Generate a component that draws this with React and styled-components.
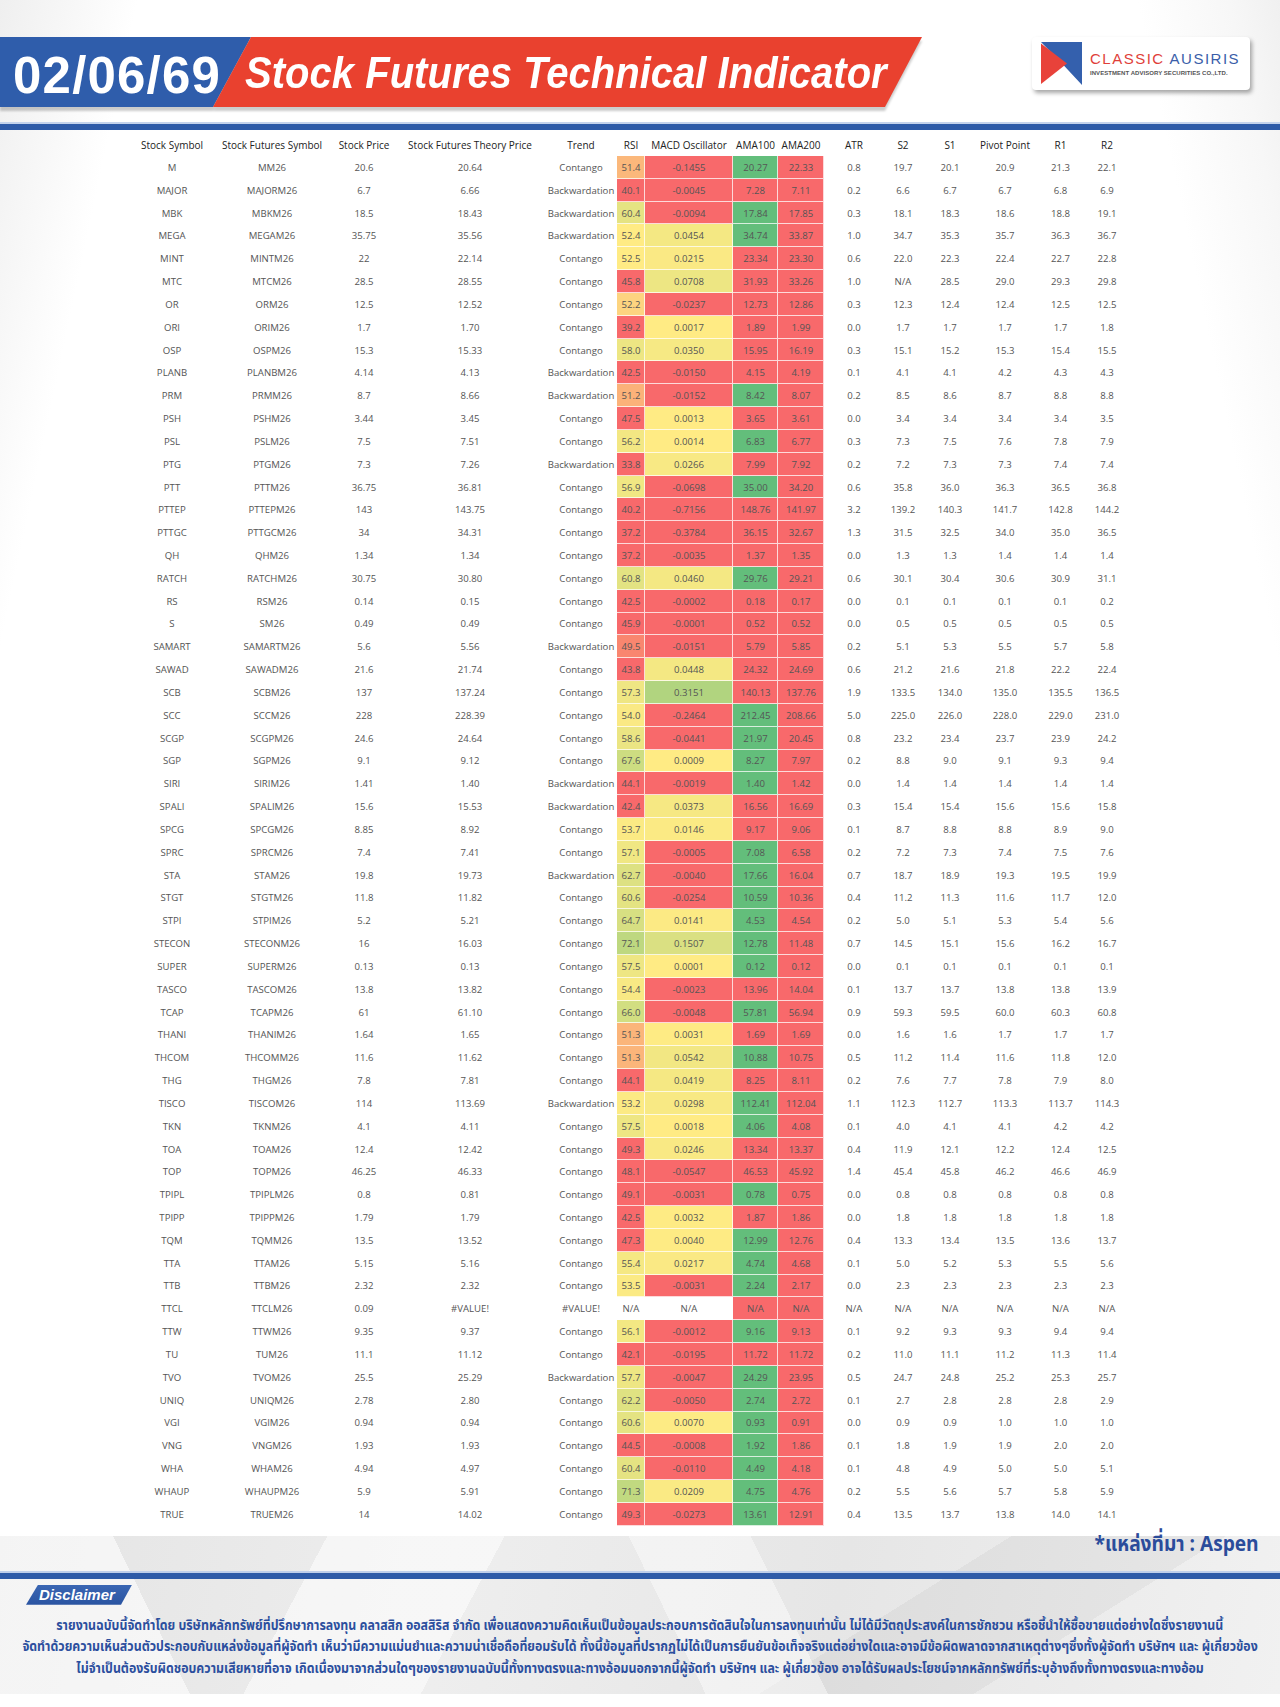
import React from "react";
import styled, { createGlobalStyle } from "styled-components";

const GlobalStyle = createGlobalStyle`
  html, body {
    margin: 0;
    padding: 0;
    background: #fff;
  }
  body {
    font-family: "Open Sans", "Liberation Sans", sans-serif;
  }
`;

// symbol, futures, price, theory, trend, rsi, macd, ama100, ama200, atr, s2, s1, pivot, r1, r2
const RAW = `
M MM26 20.6 20.64 C 51.4 -0.1455 20.27 22.33 0.8 19.7 20.1 20.9 21.3 22.1
MAJOR MAJORM26 6.7 6.66 B 40.1 -0.0045 7.28 7.11 0.2 6.6 6.7 6.7 6.8 6.9
MBK MBKM26 18.5 18.43 B 60.4 -0.0094 17.84 17.85 0.3 18.1 18.3 18.6 18.8 19.1
MEGA MEGAM26 35.75 35.56 B 52.4 0.0454 34.74 33.87 1.0 34.7 35.3 35.7 36.3 36.7
MINT MINTM26 22 22.14 C 52.5 0.0215 23.34 23.30 0.6 22.0 22.3 22.4 22.7 22.8
MTC MTCM26 28.5 28.55 C 45.8 0.0708 31.93 33.26 1.0 N/A 28.5 29.0 29.3 29.8
OR ORM26 12.5 12.52 C 52.2 -0.0237 12.73 12.86 0.3 12.3 12.4 12.4 12.5 12.5
ORI ORIM26 1.7 1.70 C 39.2 0.0017 1.89 1.99 0.0 1.7 1.7 1.7 1.7 1.8
OSP OSPM26 15.3 15.33 C 58.0 0.0350 15.95 16.19 0.3 15.1 15.2 15.3 15.4 15.5
PLANB PLANBM26 4.14 4.13 B 42.5 -0.0150 4.15 4.19 0.1 4.1 4.1 4.2 4.3 4.3
PRM PRMM26 8.7 8.66 B 51.2 -0.0152 8.42 8.07 0.2 8.5 8.6 8.7 8.8 8.8
PSH PSHM26 3.44 3.45 C 47.5 0.0013 3.65 3.61 0.0 3.4 3.4 3.4 3.4 3.5
PSL PSLM26 7.5 7.51 C 56.2 0.0014 6.83 6.77 0.3 7.3 7.5 7.6 7.8 7.9
PTG PTGM26 7.3 7.26 B 33.8 0.0266 7.99 7.92 0.2 7.2 7.3 7.3 7.4 7.4
PTT PTTM26 36.75 36.81 C 56.9 -0.0698 35.00 34.20 0.6 35.8 36.0 36.3 36.5 36.8
PTTEP PTTEPM26 143 143.75 C 40.2 -0.7156 148.76 141.97 3.2 139.2 140.3 141.7 142.8 144.2
PTTGC PTTGCM26 34 34.31 C 37.2 -0.3784 36.15 32.67 1.3 31.5 32.5 34.0 35.0 36.5
QH QHM26 1.34 1.34 C 37.2 -0.0035 1.37 1.35 0.0 1.3 1.3 1.4 1.4 1.4
RATCH RATCHM26 30.75 30.80 C 60.8 0.0460 29.76 29.21 0.6 30.1 30.4 30.6 30.9 31.1
RS RSM26 0.14 0.15 C 42.5 -0.0002 0.18 0.17 0.0 0.1 0.1 0.1 0.1 0.2
S SM26 0.49 0.49 C 45.9 -0.0001 0.52 0.52 0.0 0.5 0.5 0.5 0.5 0.5
SAMART SAMARTM26 5.6 5.56 B 49.5 -0.0151 5.79 5.85 0.2 5.1 5.3 5.5 5.7 5.8
SAWAD SAWADM26 21.6 21.74 C 43.8 0.0448 24.32 24.69 0.6 21.2 21.6 21.8 22.2 22.4
SCB SCBM26 137 137.24 C 57.3 0.3151 140.13 137.76 1.9 133.5 134.0 135.0 135.5 136.5
SCC SCCM26 228 228.39 C 54.0 -0.2464 212.45 208.66 5.0 225.0 226.0 228.0 229.0 231.0
SCGP SCGPM26 24.6 24.64 C 58.6 -0.0441 21.97 20.45 0.8 23.2 23.4 23.7 23.9 24.2
SGP SGPM26 9.1 9.12 C 67.6 0.0009 8.27 7.97 0.2 8.8 9.0 9.1 9.3 9.4
SIRI SIRIM26 1.41 1.40 B 44.1 -0.0019 1.40 1.42 0.0 1.4 1.4 1.4 1.4 1.4
SPALI SPALIM26 15.6 15.53 B 42.4 0.0373 16.56 16.69 0.3 15.4 15.4 15.6 15.6 15.8
SPCG SPCGM26 8.85 8.92 C 53.7 0.0146 9.17 9.06 0.1 8.7 8.8 8.8 8.9 9.0
SPRC SPRCM26 7.4 7.41 C 57.1 -0.0005 7.08 6.58 0.2 7.2 7.3 7.4 7.5 7.6
STA STAM26 19.8 19.73 B 62.7 -0.0040 17.66 16.04 0.7 18.7 18.9 19.3 19.5 19.9
STGT STGTM26 11.8 11.82 C 60.6 -0.0254 10.59 10.36 0.4 11.2 11.3 11.6 11.7 12.0
STPI STPIM26 5.2 5.21 C 64.7 0.0141 4.53 4.54 0.2 5.0 5.1 5.3 5.4 5.6
STECON STECONM26 16 16.03 C 72.1 0.1507 12.78 11.48 0.7 14.5 15.1 15.6 16.2 16.7
SUPER SUPERM26 0.13 0.13 C 57.5 0.0001 0.12 0.12 0.0 0.1 0.1 0.1 0.1 0.1
TASCO TASCOM26 13.8 13.82 C 54.4 -0.0023 13.96 14.04 0.1 13.7 13.7 13.8 13.8 13.9
TCAP TCAPM26 61 61.10 C 66.0 -0.0048 57.81 56.94 0.9 59.3 59.5 60.0 60.3 60.8
THANI THANIM26 1.64 1.65 C 51.3 0.0031 1.69 1.69 0.0 1.6 1.6 1.7 1.7 1.7
THCOM THCOMM26 11.6 11.62 C 51.3 0.0542 10.88 10.75 0.5 11.2 11.4 11.6 11.8 12.0
THG THGM26 7.8 7.81 C 44.1 0.0419 8.25 8.11 0.2 7.6 7.7 7.8 7.9 8.0
TISCO TISCOM26 114 113.69 B 53.2 0.0298 112.41 112.04 1.1 112.3 112.7 113.3 113.7 114.3
TKN TKNM26 4.1 4.11 C 57.5 0.0018 4.06 4.08 0.1 4.0 4.1 4.1 4.2 4.2
TOA TOAM26 12.4 12.42 C 49.3 0.0246 13.34 13.37 0.4 11.9 12.1 12.2 12.4 12.5
TOP TOPM26 46.25 46.33 C 48.1 -0.0547 46.53 45.92 1.4 45.4 45.8 46.2 46.6 46.9
TPIPL TPIPLM26 0.8 0.81 C 49.1 -0.0031 0.78 0.75 0.0 0.8 0.8 0.8 0.8 0.8
TPIPP TPIPPM26 1.79 1.79 C 42.5 0.0032 1.87 1.86 0.0 1.8 1.8 1.8 1.8 1.8
TQM TQMM26 13.5 13.52 C 47.3 0.0040 12.99 12.76 0.4 13.3 13.4 13.5 13.6 13.7
TTA TTAM26 5.15 5.16 C 55.4 0.0217 4.74 4.68 0.1 5.0 5.2 5.3 5.5 5.6
TTB TTBM26 2.32 2.32 C 53.5 -0.0031 2.24 2.17 0.0 2.3 2.3 2.3 2.3 2.3
TTCL TTCLM26 0.09 #VALUE! #VALUE! N/A N/A N/A N/A N/A N/A N/A N/A N/A N/A
TTW TTWM26 9.35 9.37 C 56.1 -0.0012 9.16 9.13 0.1 9.2 9.3 9.3 9.4 9.4
TU TUM26 11.1 11.12 C 42.1 -0.0195 11.72 11.72 0.2 11.0 11.1 11.2 11.3 11.4
TVO TVOM26 25.5 25.29 B 57.7 -0.0047 24.29 23.95 0.5 24.7 24.8 25.2 25.3 25.7
UNIQ UNIQM26 2.78 2.80 C 62.2 -0.0050 2.74 2.72 0.1 2.7 2.8 2.8 2.8 2.9
VGI VGIM26 0.94 0.94 C 60.6 0.0070 0.93 0.91 0.0 0.9 0.9 1.0 1.0 1.0
VNG VNGM26 1.93 1.93 C 44.5 -0.0008 1.92 1.86 0.1 1.8 1.9 1.9 2.0 2.0
WHA WHAM26 4.94 4.97 C 60.4 -0.0110 4.49 4.18 0.1 4.8 4.9 5.0 5.0 5.1
WHAUP WHAUPM26 5.9 5.91 C 71.3 0.0209 4.75 4.76 0.2 5.5 5.6 5.7 5.8 5.9
TRUE TRUEM26 14 14.02 C 49.3 -0.0273 13.61 12.91 0.4 13.5 13.7 13.8 14.0 14.1
`;

const TREND = { C: "Contango", B: "Backwardation" };

const rows = RAW.trim()
  .split("\n")
  .map((line) => {
    const f = line.trim().split(/\s+/);
    f[4] = TREND[f[4]] || f[4];
    return f;
  });

const HEAD = [
  "Stock Symbol",
  "Stock Futures Symbol",
  "Stock Price",
  "Stock Futures Theory Price",
  "Trend",
  "RSI",
  "MACD Oscillator",
  "AMA100",
  "AMA200",
  "ATR",
  "S2",
  "S1",
  "Pivot Point",
  "R1",
  "R2",
];

// excel-like colour scale
const RED = [248, 105, 107];
const YEL = [255, 235, 132];
const GRN = [99, 190, 123];

function mix(a, b, t) {
  const c = a.map((v, i) => Math.round(v + (b[i] - v) * t));
  return `rgb(${c.join(",")})`;
}

const RSI_STOPS = [
  [49.3, RED],
  [49.5, [249, 134, 111]],
  [51.3, [251, 181, 122]],
  [52.2, [253, 212, 128]],
  [52.4, YEL],
  [100, GRN],
];

function rsiColor(v) {
  if (isNaN(v)) return null;
  if (v <= RSI_STOPS[0][0]) return mix(RED, RED, 0);
  for (let i = 1; i < RSI_STOPS.length; i++) {
    const [hi, cHi] = RSI_STOPS[i];
    const [lo, cLo] = RSI_STOPS[i - 1];
    if (v <= hi) return mix(cLo, cHi, (v - lo) / (hi - lo));
  }
  return mix(GRN, GRN, 0);
}

function macdColor(v) {
  if (isNaN(v)) return null;
  if (v < 0) return mix(RED, RED, 0);
  return mix(YEL, GRN, Math.min(v / 0.63, 1));
}

function amaColor(price, ama) {
  if (isNaN(ama)) return mix(RED, RED, 0);
  return price > ama ? mix(GRN, GRN, 0) : mix(RED, RED, 0);
}

const DISCLAIMER = [
  "รายงานฉบับนี้จัดทำโดย บริษัทหลักทรัพย์ที่ปรึกษาการลงทุน คลาสสิก ออสสิริส จำกัด  เพื่อแสดงความคิดเห็นเป็นข้อมูลประกอบการตัดสินใจในการลงทุนเท่านั้น ไม่ได้มีวัตถุประสงค์ในการชักชวน หรือชี้นำให้ซื้อขายแต่อย่างใดซึ่งรายงานนี้",
  "จัดทำด้วยความเห็นส่วนตัวประกอบกับแหล่งข้อมูลที่ผู้จัดทำ เห็นว่ามีความแม่นยำและความน่าเชื่อถือที่ยอมรับได้ ทั้งนี้ข้อมูลที่ปรากฏไม่ได้เป็นการยืนยันข้อเท็จจริงแต่อย่างใดและอาจมีข้อผิดพลาดจากสาเหตุต่างๆซึ่งทั้งผู้จัดทำ  บริษัทฯ  และ  ผู้เกี่ยวข้อง",
  "ไม่จำเป็นต้องรับผิดชอบความเสียหายที่อาจ เกิดเนื่องมาจากส่วนใดๆของรายงานฉบับนี้ทั้งทางตรงและทางอ้อมนอกจากนี้ผู้จัดทำ บริษัทฯ และ ผู้เกี่ยวข้อง  อาจได้รับผลประโยชน์จากหลักทรัพย์ที่ระบุอ้างถึงทั้งทางตรงและทางอ้อม",
];

const THAI = `"Noto Sans Thai", "Noto Sans", "DejaVu Sans", sans-serif`;

const Page = styled.div`
  width: 1280px;
  height: 1707px;
  overflow: hidden;
  display: flex;
  flex-direction: column;
  background:
    linear-gradient(102deg, #efefef 0, #f6f6f6 60px, rgba(255, 255, 255, 0) 135px),
    linear-gradient(258deg, #f0f0f0 0, #f7f7f7 50px, rgba(255, 255, 255, 0) 140px),
    #fff;
`;

const Header = styled.header`
  box-sizing: border-box;
  height: 122px;
  padding-top: 37px;
  display: flex;
  align-items: flex-start;
`;

const Band = styled.div`
  display: flex;
  height: 70px;
  filter: drop-shadow(0 4px 1px rgba(0, 0, 0, 0.2));
`;

const DateBlock = styled.div`
  box-sizing: border-box;
  width: 251px;
  height: 70px;
  padding: 6px 0 0 13px;
  display: flex;
  align-items: center;
  background: #2f5dab;
  clip-path: polygon(0 0, 100% 0, 213px 100%, 0 100%);
  color: #fff;
  font: bold 51px "Liberation Sans", Arial, sans-serif;
  letter-spacing: 1.2px;
  white-space: nowrap;
`;

const TitleBlock = styled.div`
  box-sizing: border-box;
  width: 709px;
  height: 70px;
  margin-left: -38px;
  padding: 2px 0 0 32px;
  display: flex;
  align-items: center;
  background: #e9412f;
  clip-path: polygon(38px 0, 100% 0, calc(100% - 37px) 100%, 0 100%);
`;

const TitleText = styled.span`
  display: inline-block;
  color: #fff;
  font: italic bold 45px "Liberation Sans", Arial, sans-serif;
  white-space: nowrap;
  transform: scaleX(0.89);
  transform-origin: left center;
`;

const LogoCard = styled.div`
  box-sizing: border-box;
  width: 218px;
  height: 53px;
  margin: 0 30px 0 auto;
  padding-left: 9px;
  display: flex;
  align-items: center;
  gap: 8px;
  background: #fff;
  border-radius: 4px;
  box-shadow: 2px 3px 4px rgba(0, 0, 0, 0.35);
`;

const LogoText = styled.div`
  display: flex;
  flex-direction: column;
  gap: 5px;
  margin-top: 2px;
`;

const LogoName = styled.div`
  font: 15px/12px "Liberation Sans", Arial, sans-serif;
  letter-spacing: 1.5px;
  white-space: nowrap;
`;

const LogoWord = styled.span`
  color: ${(p) => p.$color};
`;

const LogoSub = styled.div`
  font: bold 6px/7px "Liberation Sans", Arial, sans-serif;
  color: #555;
  white-space: nowrap;
  letter-spacing: 0.05px;
`;

const Rule = styled.div`
  flex: none;
  height: 6px;
  background: #2e5ba8;
  border-top: 2px solid #c4d3ec;
`;

const Panel = styled.section`
  flex: none;
  width: 999px;
  margin-left: 133px;
  padding: 3px 0 10px;
  background: #fff;
`;

const Row = styled.div`
  display: grid;
  grid-template-columns: 78px 122px 62px 150px 72px 28px 88px 45px 46px 60px 38px 56px 54px 57px 36px;
  height: ${(p) => (p.$head ? "23px" : "22.83px")};
  font-size: ${(p) => (p.$head ? "10px" : "9.6px")};
  color: ${(p) => (p.$head ? "#222" : "#555")};
`;

const Cell = styled.div`
  display: flex;
  align-items: center;
  justify-content: center;
  white-space: nowrap;
  background: ${(p) => p.$bg || "transparent"};
  box-shadow: ${(p) => (p.$bg ? "inset -1px -1px 0 rgba(255,255,255,0.75)" : "none")};
`;

const Footer = styled.footer`
  flex: none;
  height: 158px;
  display: flex;
  flex-direction: column;
  background:
    linear-gradient(118deg, rgba(255, 255, 255, 0) 0 24%, rgba(255, 255, 255, 0.55) 24% 37%, rgba(255, 255, 255, 0) 37%),
    linear-gradient(64deg, rgba(255, 255, 255, 0.6) 0 14%, rgba(255, 255, 255, 0) 14% 52%, rgba(255, 255, 255, 0.45) 52% 61%, rgba(255, 255, 255, 0) 61%),
    linear-gradient(148deg, rgba(0, 0, 0, 0) 0 66%, rgba(0, 0, 0, 0.04) 66% 80%, rgba(0, 0, 0, 0) 80%),
    linear-gradient(100deg, #e4e4e4, #eeeeee 35%, #e6e6e6 65%, #f1f1f1);
`;

const SourceRow = styled.div`
  box-sizing: border-box;
  height: 35px;
  padding: 0 21px 16px 0;
  display: flex;
  justify-content: flex-end;
  align-items: center;
`;

const SourceText = styled.span`
  display: inline-block;
  color: #2b4c9b;
  font: bold 22px/24px ${THAI};
  white-space: nowrap;
  transform: scaleX(0.87);
  transform-origin: right center;
`;

const FootRule = styled(Rule)`
  border-top-color: #bfcfea;
`;

const Badge = styled.div`
  box-sizing: border-box;
  width: 106px;
  height: 20px;
  margin: 6px 0 0 26px;
  padding-left: 13px;
  display: flex;
  align-items: center;
  background: linear-gradient(#3a66b3, #2a54a1);
  clip-path: polygon(12px 0, 100% 0, calc(100% - 11px) 100%, 0 100%);
  color: #fff;
  font: italic bold 15px "Liberation Sans", Arial, sans-serif;
`;

const DisclaimerBody = styled.div`
  margin-top: 11px;
  display: flex;
  flex-direction: column;
  align-items: center;
`;

const DisclaimerLine = styled.div`
  height: 21.5px;
  line-height: 21.5px;
  color: #2c4f9e;
  font-family: ${THAI};
  font-weight: bold;
  font-size: 13.5px;
  white-space: nowrap;
  transform: scaleX(0.915);
`;

function Logo() {
  return (
    <svg width="41" height="43" viewBox="0 0 41 43">
      <polygon points="0,0 41,0 41,43 21,21.5" fill="#3460ad" />
      <polygon points="0,1.5 26,21.5 0,42" fill="#e8423a" />
    </svg>
  );
}

function DataRow({ r }) {
  const price = parseFloat(r[2]);
  const rsi = parseFloat(r[5]);
  const macd = parseFloat(r[6]);
  const ama100 = parseFloat(r[7]);
  const colours = {
    5: rsiColor(rsi),
    6: macdColor(macd),
    7: amaColor(price, ama100),
    8: mix(RED, RED, 0),
  };
  return (
    <Row>
      {r.map((v, i) => (
        <Cell key={i} $bg={colours[i]}>
          {v}
        </Cell>
      ))}
    </Row>
  );
}

export default function App() {
  return (
    <Page>
      <GlobalStyle />
      <Header>
        <Band>
          <DateBlock>02/06/69</DateBlock>
          <TitleBlock>
            <TitleText>Stock Futures Technical Indicator</TitleText>
          </TitleBlock>
        </Band>
        <LogoCard>
          <Logo />
          <LogoText>
            <LogoName>
              <LogoWord $color="#df3f3a">CLASSIC</LogoWord>{" "}
              <LogoWord $color="#3a5ea9">AUSIRIS</LogoWord>
            </LogoName>
            <LogoSub>INVESTMENT ADVISORY SECURITIES CO.,LTD.</LogoSub>
          </LogoText>
        </LogoCard>
      </Header>
      <Rule />
      <Panel>
        <Row $head>
          {HEAD.map((h) => (
            <Cell key={h}>{h}</Cell>
          ))}
        </Row>
        {rows.map((r) => (
          <DataRow key={r[0]} r={r} />
        ))}
      </Panel>
      <Footer>
        <SourceRow>
          <SourceText>*แหล่งที่มา : Aspen</SourceText>
        </SourceRow>
        <FootRule />
        <Badge>Disclaimer</Badge>
        <DisclaimerBody>
          {DISCLAIMER.map((line, i) => (
            <DisclaimerLine key={i}>{line}</DisclaimerLine>
          ))}
        </DisclaimerBody>
      </Footer>
    </Page>
  );
}
